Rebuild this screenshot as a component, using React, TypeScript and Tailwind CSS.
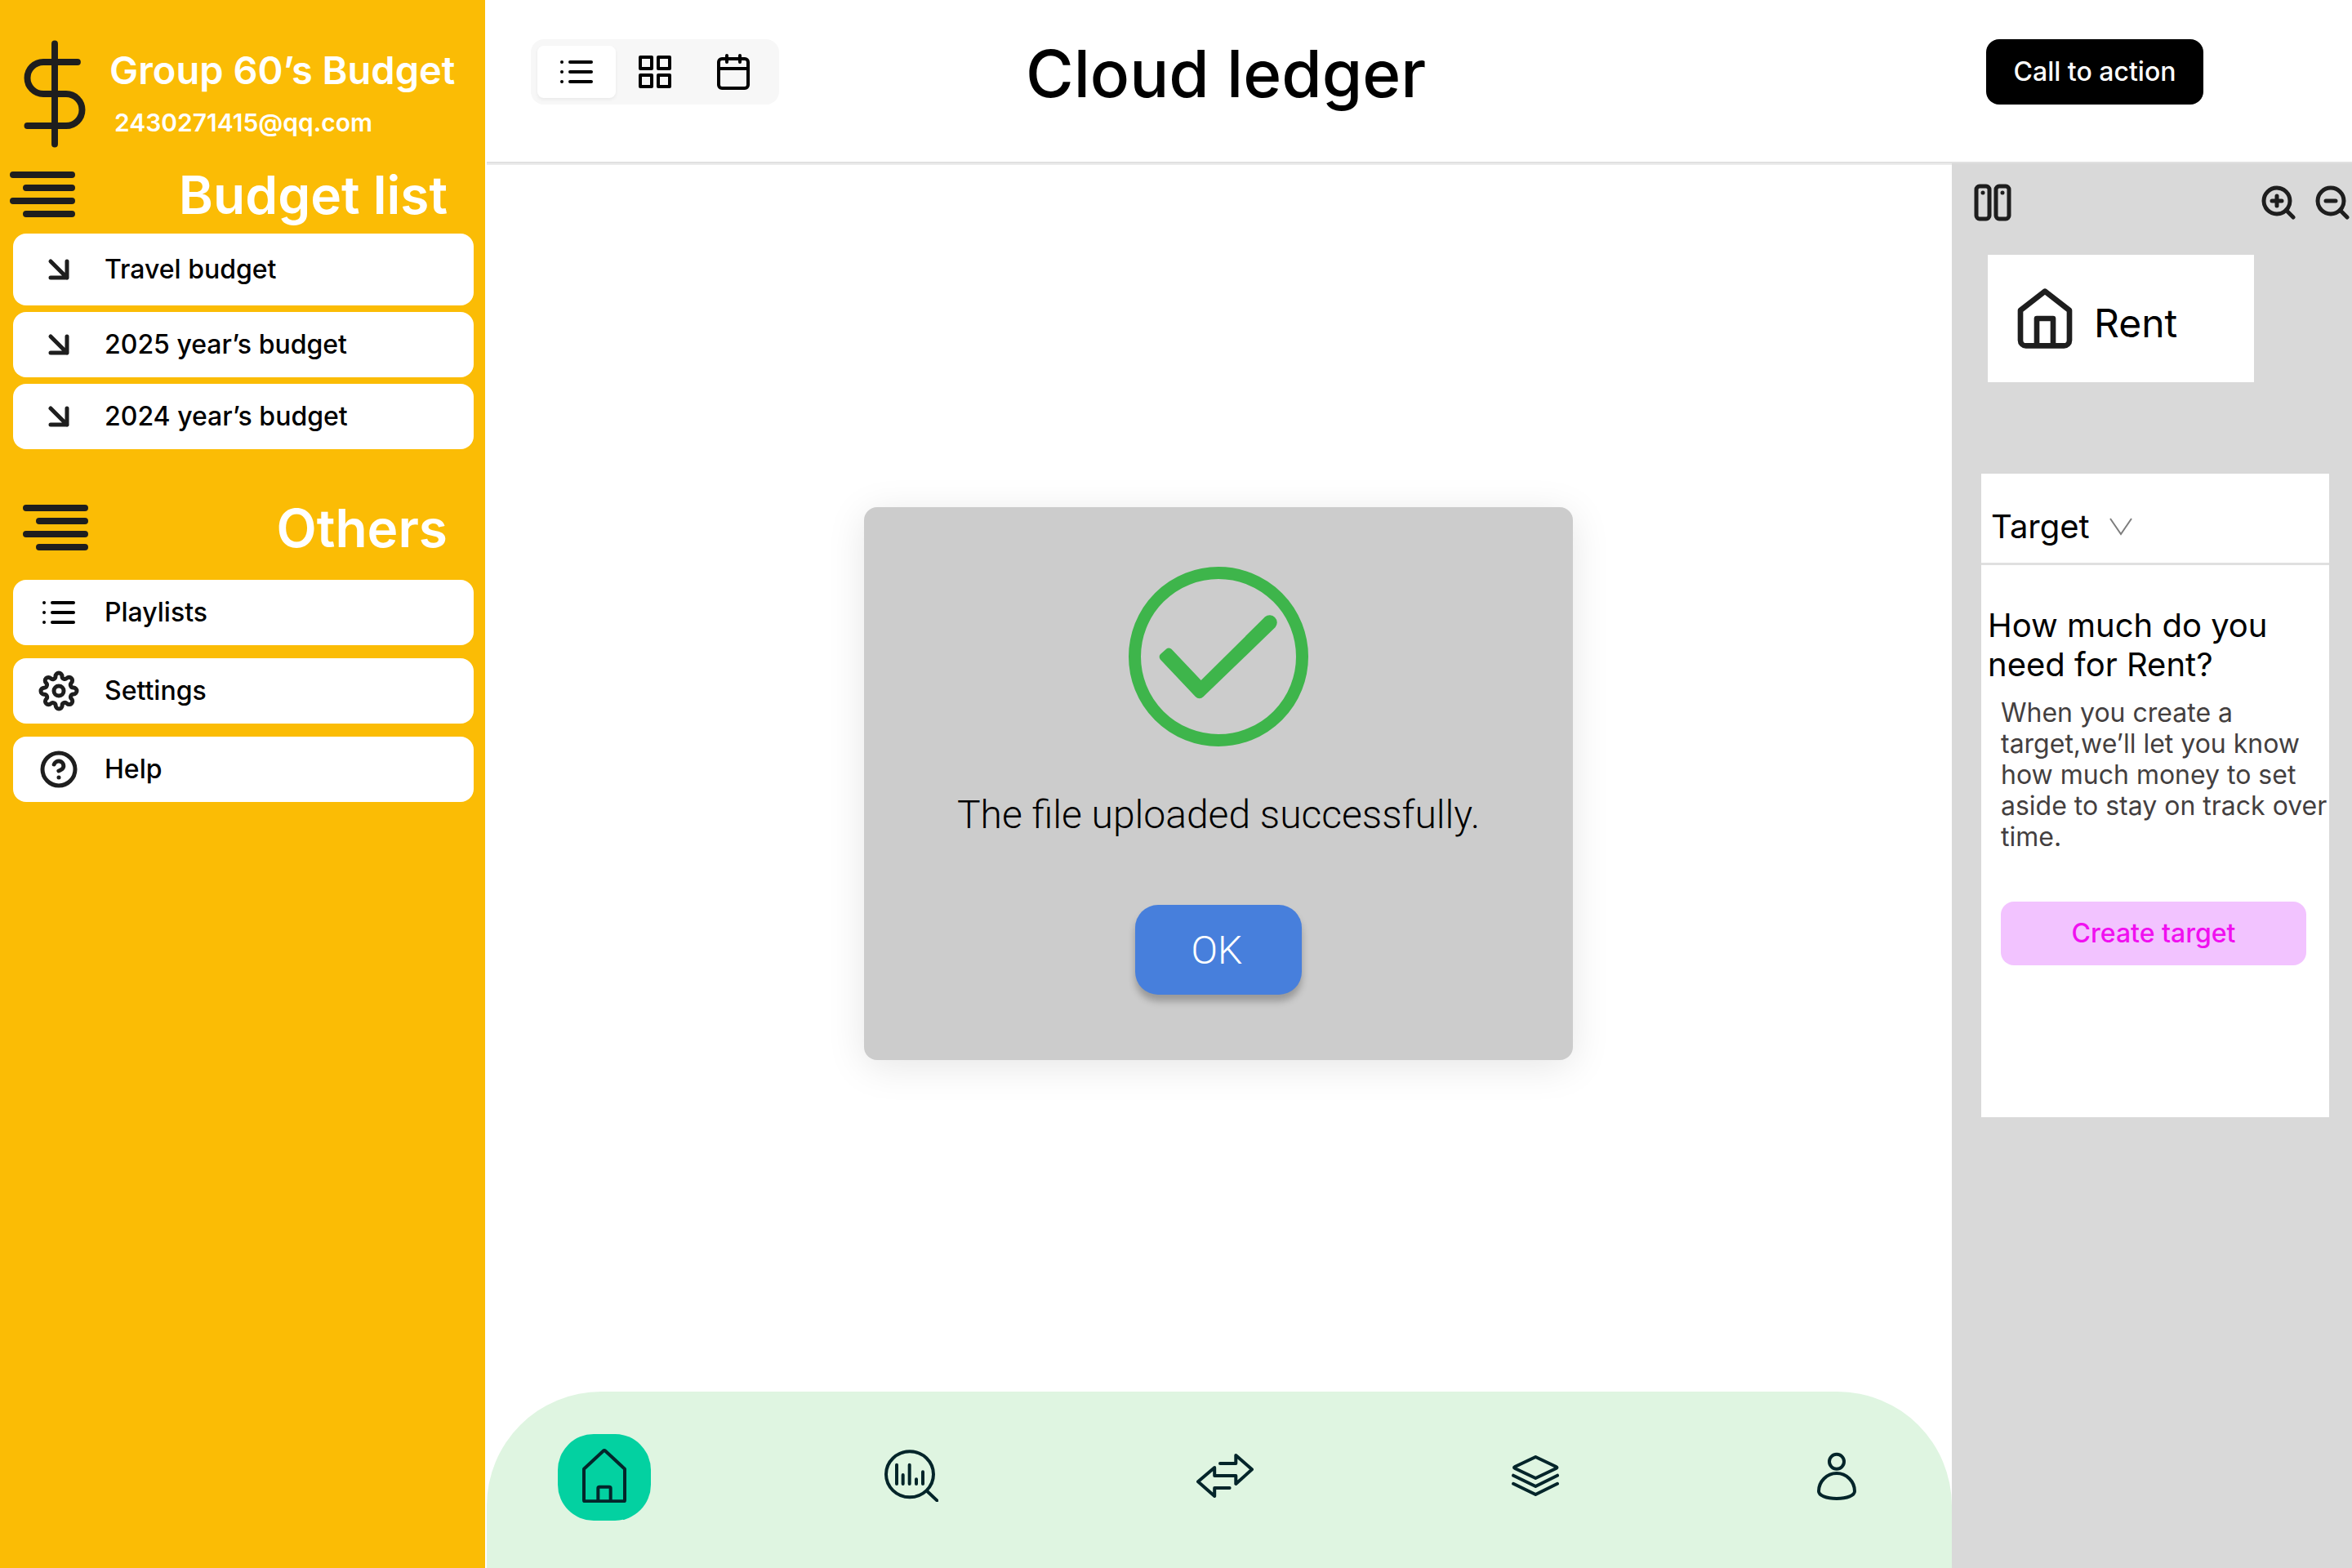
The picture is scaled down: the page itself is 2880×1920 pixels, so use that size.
import type { ReactNode } from "react";

type StrokeIconProps = {
  children: ReactNode;
  className: string;
  strokeWidth?: number;
};

function StrokeIcon({ children, className, strokeWidth = 2.5 }: StrokeIconProps) {
  return (
    <svg
      viewBox="0 0 24 24"
      fill="none"
      stroke="currentColor"
      strokeWidth={strokeWidth}
      strokeLinecap="round"
      strokeLinejoin="round"
      className={`shrink-0 overflow-visible ${className}`}
      aria-hidden="true"
    >
      {children}
    </svg>
  );
}

function ArrowDownRight() {
  return (
    <StrokeIcon className="size-12 text-[#1e1e1e]">
      <path d="M7 7l10 10M17 7v10H7" />
    </StrokeIcon>
  );
}

function ListIcon() {
  return (
    <StrokeIcon className="size-12 text-black" strokeWidth={2}>
      <path d="M8 6h13M8 12h13M8 18h13M3 6h.01M3 12h.01M3 18h.01" />
    </StrokeIcon>
  );
}

function GridIcon() {
  return (
    <StrokeIcon className="size-12 text-black" strokeWidth={2}>
      <path d="M3 3h7v7H3zM14 3h7v7h-7zM14 14h7v7h-7zM3 14h7v7H3z" />
    </StrokeIcon>
  );
}

function CalendarIcon() {
  return (
    <StrokeIcon className="size-12 text-black" strokeWidth={2}>
      <rect x="3" y="4" width="18" height="18" rx="2" />
      <path d="M16 2v4M8 2v4M3 10h18" />
    </StrokeIcon>
  );
}

function SettingsIcon() {
  return (
    <StrokeIcon className="size-12 text-[#1e1e1e]">
      <circle cx="12" cy="12" r="3" />
      <path d="M19.4 15a1.65 1.65 0 0 0 .33 1.82l.06.06a2 2 0 0 1 0 2.83 2 2 0 0 1-2.83 0l-.06-.06a1.65 1.65 0 0 0-1.82-.33 1.65 1.65 0 0 0-1 1.51V21a2 2 0 0 1-2 2 2 2 0 0 1-2-2v-.09A1.65 1.65 0 0 0 9 19.4a1.65 1.65 0 0 0-1.82.33l-.06.06a2 2 0 0 1-2.83 0 2 2 0 0 1 0-2.83l.06-.06a1.65 1.65 0 0 0 .33-1.82 1.65 1.65 0 0 0-1.51-1H3a2 2 0 0 1-2-2 2 2 0 0 1 2-2h.09A1.65 1.65 0 0 0 4.6 9a1.65 1.65 0 0 0-.33-1.82l-.06-.06a2 2 0 0 1 0-2.83 2 2 0 0 1 2.83 0l.06.06a1.65 1.65 0 0 0 1.82.33H9a1.65 1.65 0 0 0 1-1.51V3a2 2 0 0 1 2-2 2 2 0 0 1 2 2v.09a1.65 1.65 0 0 0 1 1.51 1.65 1.65 0 0 0 1.82-.33l.06-.06a2 2 0 0 1 2.83 0 2 2 0 0 1 0 2.83l-.06.06a1.65 1.65 0 0 0-.33 1.82V9a1.65 1.65 0 0 0 1.51 1H21a2 2 0 0 1 2 2 2 2 0 0 1-2 2h-.09a1.65 1.65 0 0 0-1.51 1z" />
    </StrokeIcon>
  );
}

function HelpIcon() {
  return (
    <StrokeIcon className="size-12 text-[#1e1e1e]">
      <circle cx="12" cy="12" r="10" />
      <path d="M9.09 9a3 3 0 0 1 5.83 1c0 2-3 3-3 3M12 17h.01" />
    </StrokeIcon>
  );
}

function AlignRightIcon() {
  return (
    <StrokeIcon className="size-24 text-[#1e1e1e]" strokeWidth={2}>
      <path d="M21 6H3M21 10H7M21 14H3M21 18H7" />
    </StrokeIcon>
  );
}

function DollarIcon() {
  return (
    <StrokeIcon className="size-[134px] text-[#1e1e1e]" strokeWidth={1.42}>
      <path d="M12 1v22M17 5H9.5a3.5 3.5 0 0 0 0 7h5a3.5 3.5 0 0 1 0 7H6" />
    </StrokeIcon>
  );
}

function ColumnsIcon() {
  return (
    <StrokeIcon className="size-12">
      <rect x="2" y="2" width="8" height="20" rx="2" />
      <rect x="14" y="2" width="8" height="20" rx="2" />
      <path d="M6 6v.01M18 6v.01" />
    </StrokeIcon>
  );
}

function ZoomIcon({ plus = false }: { plus?: boolean }) {
  return (
    <StrokeIcon className="size-12">
      <circle cx="11" cy="11" r="8" />
      <path d={plus ? "M21 21l-4.35-4.35M11 8v6M8 11h6" : "M21 21l-4.35-4.35M8 11h6"} />
    </StrokeIcon>
  );
}

function HomeIcon() {
  return (
    <StrokeIcon className="size-20 text-[#1e1e1e]" strokeWidth={2}>
      <path d="M3 9l9-7 9 7v11a2 2 0 0 1-2 2H5a2 2 0 0 1-2-2zM9 22V12h6v10" />
    </StrokeIcon>
  );
}

type SideItem = { label: string; icon: ReactNode; tall?: boolean };

const budgets: SideItem[] = [
  { label: "Travel budget", icon: <ArrowDownRight />, tall: true },
  { label: "2025 year’s budget", icon: <ArrowDownRight /> },
  { label: "2024 year’s budget", icon: <ArrowDownRight /> },
];

const others: SideItem[] = [
  { label: "Playlists", icon: <ListIcon /> },
  { label: "Settings", icon: <SettingsIcon /> },
  { label: "Help", icon: <HelpIcon /> },
];

function SideButton({ label, icon, tall }: SideItem) {
  return (
    <button
      type="button"
      className={`flex w-full items-center gap-8 rounded-2xl bg-white pl-8 text-left text-[32px] leading-10 font-medium text-black ${
        tall ? "h-22" : "h-20"
      }`}
    >
      {icon}
      {label}
    </button>
  );
}

function Sidebar() {
  return (
    <aside className="w-[594px] shrink-0 bg-[#fbbc05] pt-12 text-white">
      <div className="flex h-[142px]">
        <DollarIcon />
        <div className="pt-[10px]">
          <h1 className="text-[47px] leading-14 font-semibold">Group 60’s Budget</h1>
          <p className="mt-4 pl-1.5 text-[30px] leading-10 font-semibold">2430271415@qq.com</p>
        </div>
      </div>
      <div className="flex items-center justify-between pr-[46px] pl-1">
        <AlignRightIcon />
        <h2 className="text-[64px] leading-[77px] font-semibold">Budget list</h2>
      </div>
      <nav className="flex flex-col gap-2 pr-[14px] pl-4" aria-label="Budgets">
        {budgets.map((item) => (
          <SideButton key={item.label} {...item} />
        ))}
      </nav>
      <div className="mt-12 flex items-center justify-between pr-[46px] pl-5">
        <AlignRightIcon />
        <h2 className="text-[64px] leading-[77px] font-semibold">Others</h2>
      </div>
      <nav className="mt-4 flex flex-col gap-4 pr-[14px] pl-4" aria-label="Others">
        {others.map((item) => (
          <SideButton key={item.label} {...item} />
        ))}
      </nav>
    </aside>
  );
}

function Header() {
  return (
    <header className="flex h-[198px] items-start pt-12 pr-[182px] pl-[56px]">
      <div className="flex rounded-2xl bg-[#f7f7f7] p-2">
        <button type="button" aria-label="List view" className="flex h-16 w-24 items-center justify-center rounded-lg bg-white shadow-[0_2px_4px_rgba(0,0,0,0.06)]">
          <ListIcon />
        </button>
        <button type="button" aria-label="Grid view" className="flex h-16 w-24 items-center justify-center">
          <GridIcon />
        </button>
        <button type="button" aria-label="Calendar view" className="flex h-16 w-24 items-center justify-center">
          <CalendarIcon />
        </button>
      </div>
      <h2 className="ml-[302px] pt-0.5 text-[80px] leading-20 font-medium whitespace-nowrap text-black">Cloud ledger</h2>
      <button type="button" className="ml-auto h-20 w-[266px] rounded-2xl bg-black text-[32px] leading-10 font-medium text-white">
        Call to action
      </button>
    </header>
  );
}

function SuccessDialog() {
  return (
    <div
      role="dialog"
      aria-labelledby="upload-message"
      className="flex w-[868px] flex-col items-center rounded-2xl bg-[#cccccc] pt-[73px] pb-20 font-[Roboto,sans-serif] font-light shadow-[0_8px_48px_rgba(0,0,0,0.1)]"
    >
      <svg viewBox="63 38 660 660" className="size-[220px]" aria-hidden="true">
        <circle cx="393" cy="368" r="307.5" fill="none" stroke="#3eb54b" strokeWidth="45" />
        <path
          fill="#3eb54b"
          d="M180 379a14 14 0 0 1 0-20L201 340a14 14 0 0 1 20 1L329 455 564 222a27 27 0 0 1 38 38L337 516a20 20 0 0 1-28 0Z"
        />
      </svg>
      <p id="upload-message" className="mt-14 text-[48px] leading-14 text-black">
        The file uploaded successfully.
      </p>
      <button
        type="button"
        className="mt-[82px] h-[110px] w-[204px] rounded-[28px] bg-[#477fdc] pt-0.5 pr-1 text-[48px] leading-14 text-white shadow-[0_8px_8px_rgba(0,0,0,0.25)]"
      >
        OK
      </button>
    </div>
  );
}

function BottomIcon({ viewBox, className, strokeWidth, children }: { viewBox: string; className: string; strokeWidth: number; children: ReactNode }) {
  return (
    <svg
      viewBox={viewBox}
      fill="none"
      stroke="#04252a"
      strokeWidth={strokeWidth}
      strokeLinecap="round"
      strokeLinejoin="round"
      className={className}
      aria-hidden="true"
    >
      {children}
    </svg>
  );
}

function BottomNav() {
  return (
    <nav aria-label="Main" className="flex h-54 items-start justify-between rounded-t-[140px] bg-[#dff5e1] pt-[52px] pr-[117px] pl-[87px]">
      <button type="button" aria-label="Home" className="-mr-[30px] flex h-[106px] w-[114px] items-center justify-center rounded-[44px] bg-[#03d1a1] pb-1">
        <BottomIcon viewBox="129 101 162 198" className="h-[66px] w-[54px]" strokeWidth={12}>
          <path d="M135 175 206 109q4-3 8 0L285 175V290q0 4-4 4H139q-4 0-4-4ZM187 290V246q0-5 5-5h36q5 0 5 5v44" />
        </BottomIcon>
      </button>
      <button type="button" aria-label="Reports" className="flex h-[102px] items-center">
        <BottomIcon viewBox="1239 104 198 192" className="h-16 w-[66px]" strokeWidth={12}>
          <ellipse cx="1332" cy="195" rx="87" ry="84" />
          <path d="M1284 160v70M1307 197v33M1331 160v70M1356 213v17M1380 186v44M1396 257l36 34" />
        </BottomIcon>
      </button>
      <button type="button" aria-label="Transfers" className="flex h-[102px] items-center">
        <BottomIcon viewBox="65 90 70 54" className="h-[54px] w-[70px]" strokeWidth={4}>
          <path d="M94 102h19.3V92L133 109.3 113.3 127V117H87.2V107L67 124.3 87.2 142V132h18.4" />
        </BottomIcon>
      </button>
      <button type="button" aria-label="Accounts" className="flex h-[102px] items-center">
        <BottomIcon viewBox="451 91 58 52" className="h-[52px] w-[58px]" strokeWidth={4}>
          <path d="M480.3 94 505.5 106q2 1 0 2L480.3 120 455 108q-2-1 0-2ZM453.1 116.7 480.3 130 507 116.7M453.1 126.8 480.3 140 507 126.8" />
        </BottomIcon>
      </button>
      <button type="button" aria-label="Profile" className="flex h-[102px] items-center">
        <BottomIcon viewBox="125 87 48 59" className="h-[59px] w-12" strokeWidth={4}>
          <circle cx="149" cy="98.7" r="9" />
          <path d="M127 135C127 123 137 113 149 113S171 123 171 135C171 140 162 144 149 144S127 140 127 135Z" />
        </BottomIcon>
      </button>
    </nav>
  );
}

function TargetPanel() {
  return (
    <aside className="w-[490px] shrink-0 bg-[#d9d9d9] pt-6 text-black">
      <div className="flex pl-[26px] text-[#1e1e1e]">
        <button type="button" aria-label="Columns">
          <ColumnsIcon />
        </button>
        <button type="button" aria-label="Zoom in" className="ml-auto">
          <ZoomIcon plus />
        </button>
        <button type="button" aria-label="Zoom out" className="ml-[18px]">
          <ZoomIcon />
        </button>
      </div>
      <div className="mt-10 ml-11 flex h-[156px] w-[326px] items-center gap-5 bg-white pl-[30px]">
        <HomeIcon />
        <span className="pt-3 text-[48px] leading-14">Rent</span>
      </div>
      <section className="mt-28 mr-7 ml-9 h-[788px] bg-white">
        <button type="button" className="flex h-[112px] w-full items-center gap-6 border-b-3 border-[#e0e0e0] pt-5 pl-3 text-[40px] leading-12">
          Target
          <svg viewBox="0 0 28 22" className="h-[22px] w-7" fill="none" stroke="#7d7d7d" strokeWidth="2" aria-hidden="true">
            <path d="M1 1l13 19L27 1" />
          </svg>
        </button>
        <h3 className="mt-[50px] pl-2 text-[40px] leading-12">How much do you need for Rent?</h3>
        <p className="mt-4 pl-6 text-[32px] leading-[38px] text-[#443f3f]">
          When you create a target,we’ll let you know how much money to set aside to stay on track over time.
        </p>
        <button type="button" className="mt-[60px] ml-6 h-[78px] w-[374px] rounded-2xl bg-[#f2c3ff] text-[32px] leading-10 font-medium text-[#f00ff0]">
          Create target
        </button>
      </section>
    </aside>
  );
}

export default function App() {
  return (
    <div className="flex min-h-screen bg-white font-[Inter,sans-serif]">
      <Sidebar />
      <div className="flex min-w-0 flex-1 flex-col">
        <Header />
        <div className="ml-0.5 h-0.5 bg-[#e0e0e0]" />
        <div className="flex flex-1">
          <main className="ml-0.5 flex min-w-0 flex-1 flex-col">
            <div className="flex flex-1 items-center justify-center border-t-2 border-[#ececec] pt-3 pr-0.5">
              <SuccessDialog />
            </div>
            <BottomNav />
          </main>
          <TargetPanel />
        </div>
      </div>
    </div>
  );
}
